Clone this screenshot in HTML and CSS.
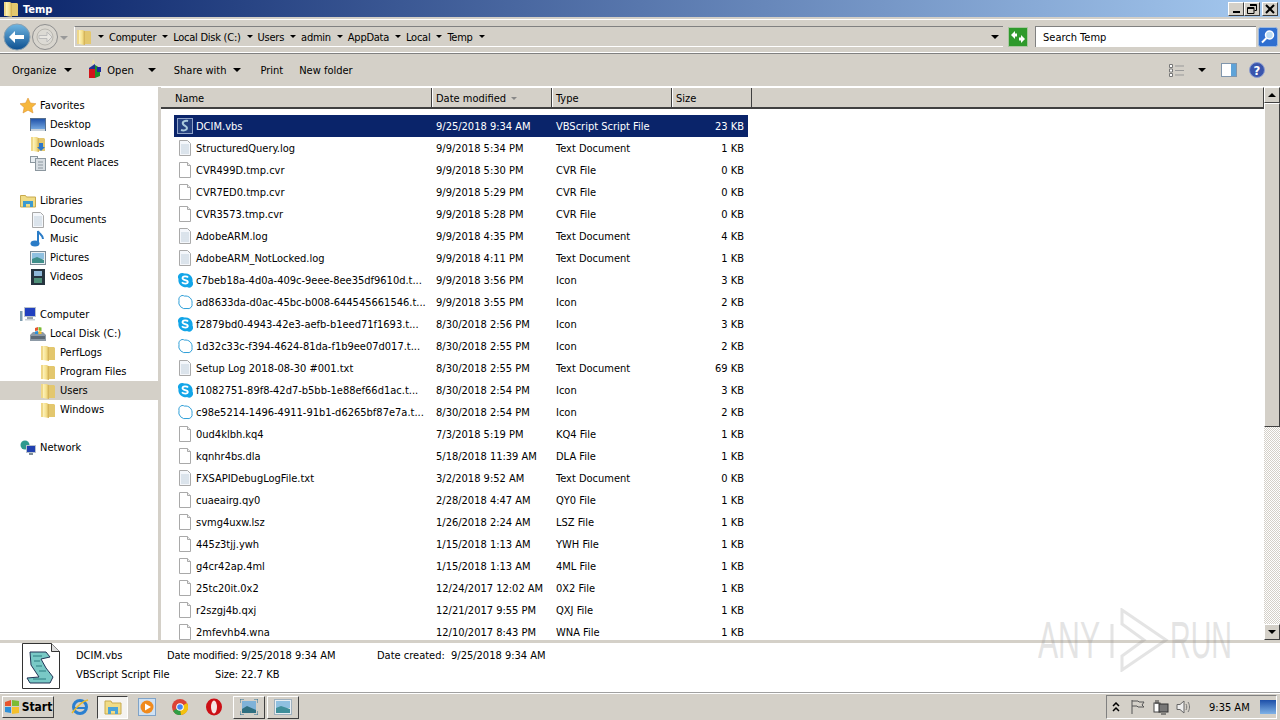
FILE: index.html
```html
<!DOCTYPE html>
<html lang="en">
  <head>
    <title>Temp</title>
    <link rel="stylesheet" href="styles.css">
  </head>
  <body>
    <!-- shared icons -->
    <svg class="defs" width="0" height="0">
      <defs>
        <linearGradient id="fold" x1="0" y1="0" x2="1" y2="0">
          <stop offset="0" stop-color="#fdf3bd"/>
          <stop offset="0.55" stop-color="#f5e08c"/>
          <stop offset="1" stop-color="#cfab4e"/>
        </linearGradient>
        <linearGradient id="blueball" x1="0" y1="0" x2="0" y2="1">
          <stop offset="0" stop-color="#6fb6e2"/>
          <stop offset="1" stop-color="#0d4f8f"/>
        </linearGradient>
        <linearGradient id="screen" x1="0" y1="0" x2="0" y2="1">
          <stop offset="0" stop-color="#1d4fa8"/>
          <stop offset="1" stop-color="#7fb2e6"/>
        </linearGradient>
        <symbol id="folder" viewBox="0 0 16 16">
          <path d="M1 1h6l1 1v13H1z" fill="#efd788"/>
          <path d="M8 2h6l1 1v12H8z" fill="#e3c76e"/>
          <path d="M3 1l6 1v14l-6-1z" fill="url(#fold)"/>
        </symbol>
        <symbol id="doc" viewBox="0 0 16 16">
          <path d="M2.500.5h8l3 3v12h-11z" fill="#fff" stroke="#a9a9a9"/>
          <path d="M10.500.5v3h3" fill="#eee" stroke="#a9a9a9"/>
        </symbol>
        <symbol id="doclog" viewBox="0 0 16 16">
          <path d="M2.500.5h8l3 3v12h-11z" fill="#f4f7fb" stroke="#a9a9a9"/>
          <path d="M4 5h8M4 7h8M4 9h8M4 11h8M4 13h8" stroke="#c2d0dc"/>
        </symbol>
        <symbol id="skype" viewBox="0 0 16 16">
          <path d="M5 1a4 4 0 0 1 2.500.6 7 7 0 0 1 8 8A4 4 0 0 1 10 15a7 7 0 0 1-8.500-8A4 4 0 0 1 5 1z" fill="#12a5e8"/>
          <path d="M11 5.500C10 4 5.500 4 5.500 6.300c0 2.300 5.300 1.400 5.300 3.700 0 2.200-4.600 2-5.800.3" fill="none" stroke="#fff" stroke-width="1.800"/>
        </symbol>
        <symbol id="skypeline" viewBox="0 0 16 16">
          <path d="M5 1.500a4 4 0 0 1 2.500.6 6.500 6.500 0 0 1 7.500 7.500A4 4 0 0 1 10 14.500 6.500 6.500 0 0 1 2 6.500 4 4 0 0 1 5 1.500z" fill="#fff" stroke="#2f9fd8"/>
        </symbol>
        <symbol id="script" viewBox="0 0 16 16">
          <rect x="0.500" y="0.500" width="15" height="15" fill="#24407f" stroke="#8fa3c8"/>
          <path d="M11 3C8 2 5 4 6 6s4 2 4 4-3 3-6 2" fill="none" stroke="#a9c9dc" stroke-width="2"/>
        </symbol>
      </defs>
    </svg>

    <!-- title bar -->
    <div class="titlebar">
      <svg class="title-icon" width="16" height="16"><use href="#folder"/></svg>
      <span class="title-text">Temp</span>
      <div class="win-buttons">
        <button class="win-btn"><span class="min-glyph"></span></button>
        <button class="win-btn">
          <svg width="10" height="10" viewBox="0 0 10 10"><path d="M3 .5h6.500v6H7.500M.5 3.500h6.500v6H.5z M3 1.500h6.500M.5 4.500h6.500" fill="none" stroke="#000"/></svg>
        </button>
        <button class="win-btn">
          <svg width="10" height="10" viewBox="0 0 10 10"><path d="M1 1l8 8M9 1l-8 8" stroke="#000" stroke-width="2"/></svg>
        </button>
      </div>
    </div>

    <!-- address bar -->
    <div class="addressbar">
      <svg class="nav-back" width="28" height="28" viewBox="0 0 28 28">
        <circle cx="14" cy="14" r="13" fill="url(#blueball)" stroke="#8aa0b0"/>
        <path d="M6 14l6-6v4h9v4h-9v4z" fill="#fff"/>
      </svg>
      <svg class="nav-forward" width="28" height="28" viewBox="0 0 28 28">
        <circle cx="14" cy="14" r="12.500" fill="#d8d5ce" stroke="#8f8f8f"/>
        <circle cx="14" cy="14" r="8" fill="#dcdad4" stroke="#b9b7b0"/>
        <path d="M21 14l-5-5v3.500H8v3h8V19z" fill="#e8e6e1" stroke="#bbb"/>
      </svg>
      <span class="nav-drop"></span>
      <div class="breadcrumb">
        <svg class="crumb-folder" width="16" height="18"><use href="#folder"/></svg>
        <span class="caret"></span>
        <span class="crumb">Computer</span><span class="caret"></span>
        <span class="crumb">Local Disk (C:)</span><span class="caret"></span>
        <span class="crumb">Users</span><span class="caret"></span>
        <span class="crumb">admin</span><span class="caret"></span>
        <span class="crumb">AppData</span><span class="caret"></span>
        <span class="crumb">Local</span><span class="caret"></span>
        <span class="crumb">Temp</span><span class="caret"></span>
        <span class="caret caret-big crumb-end"></span>
      </div>
      <svg class="refresh" width="20" height="20" viewBox="0 0 20 20">
        <rect x="0.500" y="0.500" width="19" height="19" fill="#2f9a2c" stroke="#a9c7a0"/>
        <path d="M3 8l4-4v2.500h2v3H7V12zM17 12l-4 4v-2.500h-2v-3h2V8z" fill="#fff"/>
      </svg>
      <div class="searchbox">Search Temp</div>
      <svg class="search-btn" width="20" height="20" viewBox="0 0 20 20">
        <rect x="0.500" y="0.500" width="19" height="19" rx="2" fill="#2f6fd0" stroke="#9cb9df"/>
        <circle cx="11.500" cy="8" r="4" fill="#bcdcf5" stroke="#fff" stroke-width="1.500"/>
        <path d="M8.500 11l-4.500 4.500" stroke="#fff" stroke-width="2"/>
      </svg>
    </div>

    <!-- toolbar -->
    <div class="toolbar">
      <span class="tool tool-organize">Organize</span><span class="caret caret-big tool-caret-organize"></span>
      <svg class="open-icon" width="16" height="20" viewBox="0 0 16 20">
        <path d="M5 0l2 4-3 1z" fill="#f3e39a"/>
        <path d="M1 9l6-4v6l-6 3z" fill="#20308f"/>
        <path d="M1 10h6v9H1z" fill="#d3141a"/>
        <path d="M7 6l5 3v8l-5 2z" fill="#1d8f2b"/>
        <path d="M9 8h4v5H9z" fill="#1b2a9f"/>
      </svg>
      <span class="tool tool-open">Open</span><span class="caret caret-big tool-caret-open"></span>
      <span class="tool tool-share">Share with</span><span class="caret caret-big tool-caret-share"></span>
      <span class="tool tool-print">Print</span>
      <span class="tool tool-new">New folder</span>
      <div class="toolbar-right">
        <svg width="16" height="13" viewBox="0 0 16 13"><path d="M.5.500h3v3h-3zM.5 5h3v3h-3zM.5 9.500h3v3h-3z" fill="#fff" stroke="#777"/><path d="M6 2h9M6 6.500h9M6 11h9" stroke="#999"/></svg>
        <span class="caret caret-big view-caret"></span>
        <svg class="pane-icon" width="16" height="14" viewBox="0 0 16 14"><rect x="0.500" y="0.500" width="15" height="13" fill="#fff" stroke="#8096ad"/><rect x="10" y="1" width="5" height="12" fill="#5ea3d8"/></svg>
        <svg class="help-icon" width="16" height="16" viewBox="0 0 16 16"><circle cx="8" cy="8" r="7.500" fill="#3a55ad" stroke="#8b9ccf"/><text x="8" y="12.500" class="help-mark">?</text></svg>
      </div>
    </div>

    <!-- main area -->
    <div class="main">
      <nav class="sidebar">
        <div class="nav-item level0">
          <svg width="16" height="16" viewBox="0 0 16 16"><path d="M8 0l2.400 5 5.600.7-4.100 3.800 1.100 5.500L8 12.200 3 15l1.100-5.500L0 5.700 5.600 5z" fill="#f6b73c" stroke="#d98a2b" stroke-width=".5"/></svg>
          Favorites
        </div>
        <div class="nav-item level1">
          <svg width="16" height="14" viewBox="0 0 16 14"><rect x="0.500" y="0.500" width="15" height="12" fill="url(#screen)" stroke="#56708f"/><path d="M1 11h14v2H1z" fill="#c9d3dc"/></svg>
          Desktop
        </div>
        <div class="nav-item level1">
          <svg width="16" height="16"><use href="#folder"/><path d="M9 7h4v4h2l-4 4-4-4h2z" fill="#2d77c9"/></svg>
          Downloads
        </div>
        <div class="nav-item level1">
          <svg width="16" height="16" viewBox="0 0 16 16"><rect x="0.500" y="1.500" width="7" height="6" fill="#e8edf0" stroke="#8c979f"/><rect x="5.500" y="3.500" width="10" height="12" fill="#d7dde2" stroke="#8c979f"/><path d="M8 7h5M8 10h5M8 13h5" stroke="#8c979f"/></svg>
          Recent Places
        </div>
        <div class="nav-gap"></div>
        <div class="nav-item level0">
          <svg width="16" height="15" viewBox="0 0 16 15"><path d="M.5 2.500h5l1 1.500h9v10H.5z" fill="#f0dc86" stroke="#c8aa4e"/><path d="M3 14V8h10v6h-3v-3H6v3z" fill="#3c9ad0"/></svg>
          Libraries
        </div>
        <div class="nav-item level1">
          <svg width="16" height="16"><use href="#doclog"/></svg>
          Documents
        </div>
        <div class="nav-item level1">
          <svg width="16" height="17" viewBox="0 0 16 17"><ellipse cx="5" cy="13.500" rx="4.500" ry="3" fill="#2a7cc7"/><path d="M8 13V1c1 3 5 4 5 8" fill="none" stroke="#2a7cc7" stroke-width="2"/></svg>
          Music
        </div>
        <div class="nav-item level1">
          <svg width="16" height="14" viewBox="0 0 16 14"><rect x="0.500" y="0.500" width="15" height="13" fill="#e8eef2" stroke="#7c8b96"/><path d="M2 2h12v6H2z" fill="#8fc0e0"/><path d="M2 8l5-2 7 3v3H2z" fill="#3f8f8a"/></svg>
          Pictures
        </div>
        <div class="nav-item level1">
          <svg width="16" height="16" viewBox="0 0 16 16"><rect x="1" y="0" width="14" height="16" fill="#26343f"/><rect x="4" y="2" width="8" height="5" fill="#8fb8d8"/><rect x="4" y="9" width="8" height="5" fill="#4f8f78"/></svg>
          Videos
        </div>
        <div class="nav-gap"></div>
        <div class="nav-item level0">
          <svg width="16" height="16" viewBox="0 0 16 16"><rect x="4.500" y="0.500" width="11" height="9" fill="#2140c0" stroke="#b9c2cc"/><path d="M7 10h6v2H7z" fill="#9aa5ad"/><path d="M5 12h10v1.500H5z" fill="#c9d1d6"/><rect x="0" y="4" width="2.500" height="10" fill="#7f9eb0"/></svg>
          Computer
        </div>
        <div class="nav-item level1">
          <svg width="16" height="16" viewBox="0 0 16 16"><path d="M0 9l3-3h10l3 3v6H0z" fill="#8d9aa6"/><rect x="1" y="10" width="14" height="3" fill="#5d6a76"/><path d="M5 2l3-1v3.500l-3 .5z" fill="#e8552c"/><path d="M8.500 1l3 .5V5l-3-.5z" fill="#7cbb33"/><path d="M5 5.500l3-.5v3H5z" fill="#2d8fd8"/><path d="M8.500 5l3 .5V8h-3z" fill="#f5c02c"/></svg>
          Local Disk (C:)
        </div>
        <div class="nav-item level2"><svg width="16" height="16"><use href="#folder"/></svg>PerfLogs</div>
        <div class="nav-item level2"><svg width="16" height="16"><use href="#folder"/></svg>Program Files</div>
        <div class="nav-item level2 is-current"><svg width="16" height="16"><use href="#folder"/></svg>Users</div>
        <div class="nav-item level2"><svg width="16" height="16"><use href="#folder"/></svg>Windows</div>
        <div class="nav-gap"></div>
        <div class="nav-item level0">
          <svg width="16" height="16" viewBox="0 0 16 16"><circle cx="5" cy="5" r="4.500" fill="#2f9a8f"/><rect x="6.500" y="5.500" width="9" height="7" fill="#2140b0" stroke="#b9c2cc"/><path d="M9 13h4v2H9z" fill="#7d8c98"/></svg>
          Network
        </div>
      </nav>

      <section class="files">
        <div class="file-header">
          <div class="col-head col-name">Name</div>
          <div class="col-head col-date">Date modified<span class="sort-mark"></span></div>
          <div class="col-head col-type">Type</div>
          <div class="col-head col-size">Size</div>
        </div>
        <div class="file-list">
          <div class="row selected"><span class="name"><svg width="16" height="16"><use href="#script"/></svg>DCIM.vbs</span><span>9/25/2018 9:34 AM</span><span>VBScript Script File</span><span class="size">23 KB</span></div>
          <div class="row"><span class="name"><svg width="16" height="16"><use href="#doclog"/></svg>StructuredQuery.log</span><span>9/9/2018 5:34 PM</span><span>Text Document</span><span class="size">1 KB</span></div>
          <div class="row"><span class="name"><svg width="16" height="16"><use href="#doc"/></svg>CVR499D.tmp.cvr</span><span>9/9/2018 5:30 PM</span><span>CVR File</span><span class="size">0 KB</span></div>
          <div class="row"><span class="name"><svg width="16" height="16"><use href="#doc"/></svg>CVR7ED0.tmp.cvr</span><span>9/9/2018 5:29 PM</span><span>CVR File</span><span class="size">0 KB</span></div>
          <div class="row"><span class="name"><svg width="16" height="16"><use href="#doc"/></svg>CVR3573.tmp.cvr</span><span>9/9/2018 5:28 PM</span><span>CVR File</span><span class="size">0 KB</span></div>
          <div class="row"><span class="name"><svg width="16" height="16"><use href="#doclog"/></svg>AdobeARM.log</span><span>9/9/2018 4:35 PM</span><span>Text Document</span><span class="size">4 KB</span></div>
          <div class="row"><span class="name"><svg width="16" height="16"><use href="#doclog"/></svg>AdobeARM_NotLocked.log</span><span>9/9/2018 4:11 PM</span><span>Text Document</span><span class="size">1 KB</span></div>
          <div class="row"><span class="name"><svg width="16" height="16"><use href="#skype"/></svg>c7beb18a-4d0a-409c-9eee-8ee35df9610d.t...</span><span>9/9/2018 3:56 PM</span><span>Icon</span><span class="size">3 KB</span></div>
          <div class="row"><span class="name"><svg width="16" height="16"><use href="#skypeline"/></svg>ad8633da-d0ac-45bc-b008-644545661546.t...</span><span>9/9/2018 3:55 PM</span><span>Icon</span><span class="size">2 KB</span></div>
          <div class="row"><span class="name"><svg width="16" height="16"><use href="#skype"/></svg>f2879bd0-4943-42e3-aefb-b1eed71f1693.t...</span><span>8/30/2018 2:56 PM</span><span>Icon</span><span class="size">3 KB</span></div>
          <div class="row"><span class="name"><svg width="16" height="16"><use href="#skypeline"/></svg>1d32c33c-f394-4624-81da-f1b9ee07d017.t...</span><span>8/30/2018 2:55 PM</span><span>Icon</span><span class="size">2 KB</span></div>
          <div class="row"><span class="name"><svg width="16" height="16"><use href="#doclog"/></svg>Setup Log 2018-08-30 #001.txt</span><span>8/30/2018 2:55 PM</span><span>Text Document</span><span class="size">69 KB</span></div>
          <div class="row"><span class="name"><svg width="16" height="16"><use href="#skype"/></svg>f1082751-89f8-42d7-b5bb-1e88ef66d1ac.t...</span><span>8/30/2018 2:54 PM</span><span>Icon</span><span class="size">3 KB</span></div>
          <div class="row"><span class="name"><svg width="16" height="16"><use href="#skypeline"/></svg>c98e5214-1496-4911-91b1-d6265bf87e7a.t...</span><span>8/30/2018 2:54 PM</span><span>Icon</span><span class="size">2 KB</span></div>
          <div class="row"><span class="name"><svg width="16" height="16"><use href="#doc"/></svg>0ud4klbh.kq4</span><span>7/3/2018 5:19 PM</span><span>KQ4 File</span><span class="size">1 KB</span></div>
          <div class="row"><span class="name"><svg width="16" height="16"><use href="#doc"/></svg>kqnhr4bs.dla</span><span>5/18/2018 11:39 AM</span><span>DLA File</span><span class="size">1 KB</span></div>
          <div class="row"><span class="name"><svg width="16" height="16"><use href="#doclog"/></svg>FXSAPIDebugLogFile.txt</span><span>3/2/2018 9:52 AM</span><span>Text Document</span><span class="size">0 KB</span></div>
          <div class="row"><span class="name"><svg width="16" height="16"><use href="#doc"/></svg>cuaeairg.qy0</span><span>2/28/2018 4:47 AM</span><span>QY0 File</span><span class="size">1 KB</span></div>
          <div class="row"><span class="name"><svg width="16" height="16"><use href="#doc"/></svg>svmg4uxw.lsz</span><span>1/26/2018 2:24 AM</span><span>LSZ File</span><span class="size">1 KB</span></div>
          <div class="row"><span class="name"><svg width="16" height="16"><use href="#doc"/></svg>445z3tjj.ywh</span><span>1/15/2018 1:13 AM</span><span>YWH File</span><span class="size">1 KB</span></div>
          <div class="row"><span class="name"><svg width="16" height="16"><use href="#doc"/></svg>g4cr42ap.4ml</span><span>1/15/2018 1:13 AM</span><span>4ML File</span><span class="size">1 KB</span></div>
          <div class="row"><span class="name"><svg width="16" height="16"><use href="#doc"/></svg>25tc20it.0x2</span><span>12/24/2017 12:02 AM</span><span>0X2 File</span><span class="size">1 KB</span></div>
          <div class="row"><span class="name"><svg width="16" height="16"><use href="#doc"/></svg>r2szgj4b.qxj</span><span>12/21/2017 9:55 PM</span><span>QXJ File</span><span class="size">1 KB</span></div>
          <div class="row"><span class="name"><svg width="16" height="16"><use href="#doc"/></svg>2mfevhb4.wna</span><span>12/10/2017 8:43 PM</span><span>WNA File</span><span class="size">1 KB</span></div>
        </div>
      </section>

      <div class="scrollbar">
        <button class="scroll-btn"><span class="tri-up"></span></button>
        <div class="scroll-thumb"></div>
        <div class="scroll-track"></div>
        <button class="scroll-btn"><span class="tri-down"></span></button>
      </div>
    </div>

    <!-- details pane -->
    <div class="details">
      <svg class="details-icon" width="38" height="46" viewBox="0 0 38 46">
        <path d="M.5.500h29l8 8v37H.5z" fill="#fff" stroke="#333"/>
        <path d="M29.500.500v8h8" fill="#ddd" stroke="#333"/>
        <path d="M8 9h16l4 5-9 2 5 9 7 9-3 6H8l-3-5 12-1-8-12z" fill="#79c9c6" stroke="#235" stroke-width="1"/>
        <path d="M11 13h9M12 18h6M14 23h6M17 28h7M11 36h13" stroke="#2c7c80"/>
      </svg>
      <div class="details-col details-name">
        <div>DCIM.vbs</div>
        <div>VBScript Script File</div>
      </div>
      <div class="details-col details-labels">
        <div>Date modified:</div>
        <div>Size:</div>
      </div>
      <div class="details-col details-values">
        <div>9/25/2018 9:34 AM</div>
        <div>22.7 KB</div>
      </div>
      <div class="details-col details-labels2">
        <div>Date created:</div>
      </div>
      <div class="details-col">
        <div>9/25/2018 9:34 AM</div>
      </div>
    </div>

    <!-- taskbar -->
    <div class="taskbar">
      <button class="start">
        <svg width="16" height="16" viewBox="0 0 16 16"><path d="M1 3l6-2v6H1z" fill="#e8552c"/><path d="M8 1l7 1v5H8z" fill="#7cbb33"/><path d="M1 8h6v6l-6-1z" fill="#2d8fd8"/><path d="M8 8h7v6l-7 1z" fill="#f5c02c"/></svg>
        Start
      </button>
      <svg class="task-ie" width="18" height="18" viewBox="0 0 18 18"><circle cx="9" cy="9" r="6.500" fill="none" stroke="#2a7fd0" stroke-width="3"/><path d="M3 10h12" stroke="#2a7fd0" stroke-width="2"/><path d="M1 15C4 11 11 3 17 2" fill="none" stroke="#e8b92c" stroke-width="1.500"/></svg>
      <div class="task-explorer"><svg width="18" height="18" viewBox="0 0 18 18"><path d="M1 3h6l1 2h9v11H1z" fill="#f0dc86" stroke="#c8aa4e"/><path d="M4 16V9h10v7h-3v-3H7v3z" fill="#4aa3d8"/></svg></div>
      <svg class="task-wmp" width="18" height="18" viewBox="0 0 18 18"><rect x="0.500" y="0.500" width="17" height="17" fill="#cfe1f3" stroke="#7fa3c8"/><circle cx="9" cy="9" r="6.500" fill="#f08a1d"/><path d="M7 5.500l6 3.500-6 3.500z" fill="#fff"/></svg>
      <svg class="task-chrome" width="16" height="16" viewBox="0 0 16 16"><circle cx="8" cy="8" r="8" fill="#db4437"/><path d="M8 8L1 12a8 8 0 0 0 8 4z" fill="#2f9e44"/><path d="M8 8l7-4a8 8 0 0 1-6 12z" fill="#f4c20d"/><circle cx="8" cy="8" r="3.800" fill="#fff"/><circle cx="8" cy="8" r="2.800" fill="#4285f4"/></svg>
      <svg class="task-opera" width="16" height="18" viewBox="0 0 16 18"><ellipse cx="8" cy="9" rx="8" ry="8.500" fill="#cc0f16"/><ellipse cx="8" cy="9" rx="3" ry="6.500" fill="#f5e5e5"/></svg>
      <button class="task-btn"><svg width="18" height="16" viewBox="0 0 18 16"><rect x="2" y="2" width="14" height="12" fill="#7fb2d8"/><path d="M2 10l5-3 9 4v3H2z" fill="#2f6f80"/><path d="M0 4V0h4M14 0h4v4M18 12v4h-4M4 16H0v-4" fill="none" stroke="#2f6f90"/></svg></button>
      <button class="task-btn"><svg width="18" height="16" viewBox="0 0 18 16"><rect x="0.500" y="0.500" width="17" height="15" fill="#e8eef2" stroke="#9fb0bd"/><path d="M2 2h14v7H2z" fill="#8fc0e0"/><path d="M2 9l5-2 9 3v4H2z" fill="#3f8f9a"/></svg></button>
      <div class="tray">
        <svg class="tray-chev" width="8" height="10" viewBox="0 0 8 10"><path d="M1 4l3-3 3 3M1 9l3-3 3 3" fill="none" stroke="#000" stroke-width="1.500"/></svg>
        <svg class="tray-flag" width="16" height="16" viewBox="0 0 16 16"><path d="M2 1v14M2 2h6l1 1h5l-2 3 2 2H8L7 7H2" fill="none" stroke="#555"/></svg>
        <svg class="tray-net" width="16" height="16" viewBox="0 0 16 16"><rect x="1" y="4" width="6" height="9" fill="#fff" stroke="#444"/><rect x="6" y="5" width="9" height="8" fill="#777" stroke="#333"/><path d="M3 1v4M5 1v4" stroke="#333"/><path d="M8 15h5" stroke="#333"/></svg>
        <svg class="tray-sound" width="16" height="16" viewBox="0 0 16 16"><path d="M1 5.500h3L8 2v12L4 10.500H1z" fill="#eee" stroke="#666"/><path d="M10 5c1 2 1 4 0 6M12 3c2 3 2 7 0 10" fill="none" stroke="#777"/></svg>
        <span class="clock">9:35 AM</span>
        <svg class="tray-desktop" width="16" height="14" viewBox="0 0 16 14"><rect width="16" height="14" fill="url(#screen)"/></svg>
      </div>
    </div>

    <!-- watermark sits over everything -->
    <div class="watermark">
      <span class="mark-word">ANY</span>
      <svg class="mark-play" width="66" height="64" viewBox="0 0 66 64"><path d="M8 16v34M18 2l44 30-44 30V48l22-16-22-16z" fill="none" stroke="#888" stroke-width="3"/></svg>
      <span class="mark-word mark-run">RUN</span>
    </div>
  </body>
</html>
```

FILE: styles.css
```css
* {
  box-sizing: border-box;
}
html,
body {
  margin: 0;
  height: 720px;
  overflow: hidden;
}
body {
  background-color: #d4d0c8;
  color: #000;
  font-family: "DejaVu Sans Condensed", "DejaVu Sans", Arial, sans-serif;
  font-size: 11px;
  display: flex;
  flex-direction: column;
  position: relative;
}
button {
  font-family: inherit;
  padding: 0;
}
svg {
  flex: none;
  display: block;
}
.defs {
  position: absolute;
}

/* title bar */
.titlebar {
  height: 18px;
  flex: none;
  display: flex;
  align-items: center;
  padding: 0 2px 0 3px;
  background: linear-gradient(to right, #0a246a, #a6caf0);
  border-bottom: 1px solid #d4d0c8;
}
.title-text {
  color: #fff;
  font-weight: bold;
  margin: 2px 0 0 4px;
}
.win-buttons {
  margin-left: auto;
  display: flex;
}
.win-btn {
  width: 16px;
  height: 14px;
  background-color: #d4d0c8;
  border: 1px solid;
  border-color: #fff #404040 #404040 #fff;
  display: flex;
  align-items: center;
  justify-content: center;
}
.win-btn:nth-child(3) {
  margin-left: 2px;
}
.min-glyph {
  width: 7px;
  height: 2px;
  background-color: #000;
  margin-top: 7px;
}

/* address bar */
.addressbar {
  height: 35px;
  flex: none;
  display: flex;
  align-items: center;
  padding-left: 3px;
  margin-top: 1px;
  border-top: 1px solid #fff;
  border-bottom: 1px solid #808080;
  box-shadow: inset 0 -1px 0 #fff;
}
.nav-drop {
  width: 0;
  height: 0;
  margin: 2px 4px 0 1px;
  border: 4px solid transparent;
  border-top: 4px solid #999;
  border-bottom: none;
}
.breadcrumb {
  width: 929px;
  height: 21px;
  margin-left: 2px;
  display: flex;
  align-items: center;
  border-top: 1px solid #808080;
  border-bottom: 1px solid #fff;
  border-left: 1px solid #fff;
}
.crumb-folder {
  margin-left: 1px;
}
.crumb {
  margin-top: 1px;
  letter-spacing: -0.25px;
  white-space: nowrap;
}
.caret {
  width: 0;
  height: 0;
  margin: 0 5px 0 6px;
  border-style: solid;
  border-width: 3px 3px 0;
  border-color: #000 transparent transparent;
}
.caret-big {
  border-width: 4px 4px 0;
}
.crumb-end {
  margin-left: auto;
  margin-right: 4px;
}
.refresh {
  margin-left: 5px;
}
.searchbox {
  width: 221px;
  height: 21px;
  margin-left: 7px;
  padding: 4px 7px 0;
  background-color: #fff;
  border-top: 1px solid #808080;
  border-left: 1px solid #808080;
}
.search-btn {
  margin-left: 2px;
}

/* toolbar */
.toolbar {
  height: 32px;
  flex: none;
  display: flex;
  align-items: center;
  padding-left: 12px;
}
.tool-caret-organize {
  margin: 0 0 0 8px;
}
.open-icon {
  margin-left: 16px;
  margin-top: -3px;
}
.tool-open {
  margin-left: 3px;
}
.tool-caret-open {
  margin: 0 0 0 14px;
}
.tool-share {
  margin-left: 18px;
}
.tool-caret-share {
  margin: 0 0 0 7px;
}
.tool-print {
  margin-left: 19px;
}
.tool-new {
  margin-left: 16px;
}
.toolbar-right {
  margin-left: auto;
  margin-right: 15px;
  display: flex;
  align-items: center;
}
.view-caret {
  margin: 0 0 0 13px;
}
.pane-icon {
  margin-left: 15px;
}
.help-icon {
  margin-left: 12px;
}
.help-mark {
  fill: #fff;
  font-size: 13px;
  font-weight: bold;
  text-anchor: middle;
}

/* main area */
.main {
  height: 554px;
  flex: none;
  display: flex;
  background-color: #fff;
  border-top: 1px solid #fff;
  overflow: hidden;
}
.sidebar {
  width: 158px;
  flex: none;
  padding-top: 9px;
  background-color: #fff;
}
.nav-item {
  height: 19px;
  display: flex;
  align-items: center;
  gap: 4px;
}
.nav-gap {
  height: 19px;
}
.level0 {
  padding-left: 20px;
}
.level1 {
  padding-left: 30px;
}
.level2 {
  padding-left: 40px;
}
.is-current {
  background-color: #d4d0c8;
}
.files {
  width: 1103px;
  flex: none;
  margin-left: 3px;
  box-shadow: -3px 0 0 #d4d0c8;
  display: flex;
  flex-direction: column;
}
.file-header {
  height: 22px;
  flex: none;
  display: flex;
  background-color: #d4d0c8;
  border-bottom: 2px solid #404040;
  border-right: 1px solid #404040;
  border-top: 1px solid #fff;
}
.col-head {
  padding: 4px 0 0 3px;
  border-left: 1px solid #fff;
  border-right: 1px solid #404040;
}
.col-name {
  width: 271px;
  padding-left: 14px;
  border-left: 0;
}
.col-date {
  width: 120px;
}
.col-type {
  width: 120px;
}
.col-size {
  width: 80px;
}
.sort-mark {
  display: inline-block;
  width: 0;
  height: 0;
  margin: 0 0 2px 5px;
  border: 3px solid transparent;
  border-top: 3px solid #888;
  border-bottom: none;
}
.file-list {
  flex: 1;
  min-height: 0;
  padding: 6px 0 0 13px;
  overflow: hidden;
}
.row {
  width: 574px;
  height: 22px;
  display: grid;
  grid-template-columns: 262px 120px 120px 72px;
  align-items: center;
}
.row.selected {
  background-color: #0a246a;
  color: #fff;
}
.name {
  display: flex;
  align-items: center;
  gap: 3px;
  padding-left: 3px;
  white-space: nowrap;
}
.size {
  text-align: right;
  padding-right: 4px;
}

/* scrollbar */
.scrollbar {
  width: 16px;
  flex: none;
  display: flex;
  flex-direction: column;
}
.scroll-btn {
  width: 16px;
  height: 16px;
  flex: none;
  background-color: #d4d0c8;
  border: 1px solid;
  border-color: #fff #404040 #404040 #fff;
  display: flex;
  align-items: center;
  justify-content: center;
}
.scroll-thumb {
  height: 324px;
  flex: none;
  background-color: #d4d0c8;
  border: 1px solid;
  border-color: #fff #404040 #404040 #fff;
}
.scroll-track {
  flex: 1;
  background-image: repeating-conic-gradient(#d4d0c8 0 25%, #fff 0 50%);
  background-size: 2px 2px;
}
.tri-up {
  border: 4px solid transparent;
  border-bottom: 4px solid #000;
  border-top: none;
}
.tri-down {
  border: 4px solid transparent;
  border-top: 4px solid #000;
  border-bottom: none;
}

/* details pane */
.details {
  height: 50px;
  margin-top: 3px;
  flex: none;
  display: flex;
  background-color: #fff;
  border-bottom: 1px solid #a0a0a0;
}
.details-icon {
  margin-left: 22px;
}
.details-col {
  padding-top: 3px;
  line-height: 19px;
  white-space: nowrap;
}
.details-name {
  width: 91px;
  margin-left: 16px;
}
.details-labels {
  width: 71px;
  text-align: right;
  letter-spacing: -0.15px;
}
.details-values {
  width: 136px;
  margin-left: 3px;
}
.details-labels2 {
  width: 74px;
}

/* taskbar */
.taskbar {
  flex: 1;
  display: flex;
  align-items: center;
  border-top: 1px solid #fff;
  padding-left: 2px;
}
.start {
  width: 52px;
  height: 22px;
  display: flex;
  align-items: center;
  justify-content: center;
  gap: 2px;
  font-size: 12px;
  font-weight: bold;
  background-color: #d4d0c8;
  border: 1px solid;
  border-color: #fff #404040 #404040 #fff;
}
.task-ie {
  margin-left: 17px;
}
.task-explorer {
  width: 31px;
  height: 23px;
  margin-left: 8px;
  display: flex;
  align-items: center;
  justify-content: center;
  background-color: #f4f3f0;
  border: 1px solid;
  border-color: #404040 #fff #fff #404040;
}
.task-wmp {
  margin-left: 10px;
}
.task-chrome {
  margin-left: 16px;
}
.task-opera {
  margin-left: 18px;
}
.task-btn {
  width: 32px;
  height: 23px;
  margin-left: 2px;
  display: flex;
  align-items: center;
  justify-content: center;
  background-color: #d4d0c8;
  border: 1px solid;
  border-color: #fff #404040 #404040 #fff;
}
.task-opera + .task-btn {
  margin-left: 11px;
}
.tray {
  width: 171px;
  height: 24px;
  margin-left: auto;
  margin-right: 3px;
  display: flex;
  align-items: center;
  border: 1px solid;
  border-color: #808080 #fff #fff #808080;
}
.tray-chev {
  margin-left: 5px;
}
.tray-flag {
  margin-left: 10px;
}
.tray-net {
  margin-left: 7px;
}
.tray-sound {
  margin-left: 7px;
}
.clock {
  margin-left: 17px;
}
.tray-desktop {
  margin-left: auto;
}

/* watermark */
.watermark {
  position: absolute;
  left: 1038px;
  top: 608px;
  display: flex;
  align-items: center;
  opacity: 0.22;
  pointer-events: none;
  font-family: "Liberation Sans", Arial, sans-serif;
  font-size: 52px;
  color: #888;
}
.mark-word {
  width: 62px;
  white-space: nowrap;
  transform: scaleX(0.58);
  transform-origin: left center;
}
.mark-run {
  transform: scaleX(0.55);
}
.mark-play {
  margin-left: 4px;
}
```
